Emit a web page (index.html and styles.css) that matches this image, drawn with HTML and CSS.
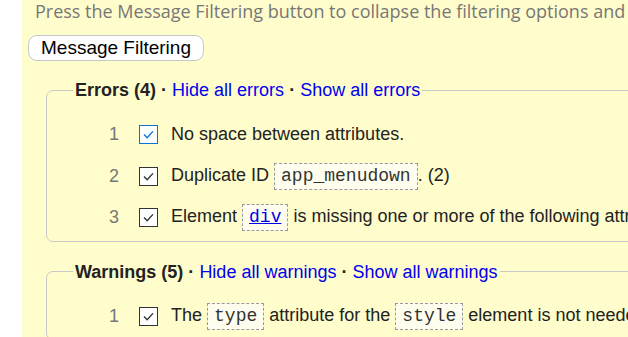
FILE: index.html
```html
<!DOCTYPE html>
<html>
<head>
<meta charset="utf-8">
<link rel="stylesheet" href="styles.css">
</head>
<body>
<div class="page">
  <p class="hint">Press the Message Filtering button to collapse the filtering options and hide them from view.</p>
  <button class="filter-btn" type="button">Message Filtering</button>

  <fieldset class="group">
    <legend class="group-title"><strong>Errors (4)</strong> <span class="sep">·</span> <a href="#">Hide all errors</a> <span class="sep">·</span> <a href="#">Show all errors</a></legend>
    <ol class="msgs">
      <li class="msg">
        <span class="num">1</span>
        <span class="check focused"><svg viewBox="0 0 19 19"><path d="M4.5 9.5 L8 13 L14.5 6"/></svg></span>
        <span class="text">No space between attributes.</span>
      </li>
      <li class="msg">
        <span class="num">2</span>
        <span class="check"><svg viewBox="0 0 19 19"><path d="M4.5 9.5 L8 13 L14.5 6"/></svg></span>
        <span class="text">Duplicate ID <code class="code">app_menudown</code>. (2)</span>
      </li>
      <li class="msg">
        <span class="num">3</span>
        <span class="check"><svg viewBox="0 0 19 19"><path d="M4.5 9.5 L8 13 L14.5 6"/></svg></span>
        <span class="text">Element <code class="code"><a href="#">div</a></code> is missing one or more of the following attributes: role.</span>
      </li>
    </ol>
  </fieldset>

  <fieldset class="group">
    <legend class="group-title"><strong>Warnings (5)</strong> <span class="sep">·</span> <a href="#">Hide all warnings</a> <span class="sep">·</span> <a href="#">Show all warnings</a></legend>
    <ol class="msgs">
      <li class="msg">
        <span class="num">1</span>
        <span class="check"><svg viewBox="0 0 19 19"><path d="M4.5 9.5 L8 13 L14.5 6"/></svg></span>
        <span class="text">The <code class="code">type</code> attribute for the <code class="code">style</code> element is not needed and should be omitted.</span>
      </li>
    </ol>
  </fieldset>
</div>
</body>
</html>
```

FILE: styles.css
```css
html, body {
  margin: 0;
  padding: 0;
  background: #ffffff;
  overflow: hidden;
}

.page {
  margin-left: 22px;
  background: #fffdcc;
  padding: 0 0 40px 7px;
  min-height: 337px;
  font-family: "Liberation Sans", Arial, sans-serif;
  font-size: 18px;
  color: #222;
  white-space: nowrap;
}

.hint {
  margin: 0;
  padding-left: 6px;
  font-family: "Open Sans", sans-serif;
  font-size: 18px;
  line-height: 22px;
  color: #777;
}

.filter-btn {
  display: block;
  margin: 13px 0 0 -1px;
  height: 26px;
  padding: 0 12px;
  background: #fff;
  border: 1px solid #c8c8c8;
  border-radius: 9px;
  font-family: "Liberation Sans", Arial, sans-serif;
  font-size: 19px;
  line-height: 24px;
  color: #000;
}

.group {
  margin: 19px 0 0 17px;
  padding: 0;
  border: 1px solid #c8c8c8;
  border-radius: 7px;
  min-width: 0;
  width: 700px;
}

.group + .group {
  margin-top: 20px;
}

.group-title {
  margin-left: 26px;
  padding: 0 2px;
  font-size: 18px;
  line-height: 20px;
}

.group-title strong {
  color: #222;
}

.group-title a {
  color: #0000ee;
  text-decoration: none;
}

.sep {
  font-weight: bold;
}

.msgs {
  list-style: none;
  margin: 0;
  padding: 14px 0 2px 0;
}

.msg {
  display: flex;
  align-items: center;
  height: 41.5px;
}

.num {
  flex: none;
  width: 72px;
  text-align: right;
  color: #777;
}

.check {
  flex: none;
  margin-left: 20px;
  width: 19px;
  height: 19px;
  box-sizing: border-box;
  border: 1.5px solid #333;
  background: #fff;
  display: flex;
}

.check svg {
  width: 100%;
  height: 100%;
  fill: none;
  stroke: #333;
  stroke-width: 1.6;
}

.check.focused {
  border-color: #0a74d6;
}

.check.focused svg {
  stroke: #0a74d6;
}

.text {
  flex: none;
  margin-left: 13px;
}

.code {
  display: inline-block;
  font-family: "Liberation Mono", "Courier New", monospace;
  font-size: 18px;
  line-height: 25px;
  padding: 0 6px;
  border: 1px dashed #999;
  background: #fffeee;
  color: #333;
}

.code a {
  color: #0000ee;
}
```
